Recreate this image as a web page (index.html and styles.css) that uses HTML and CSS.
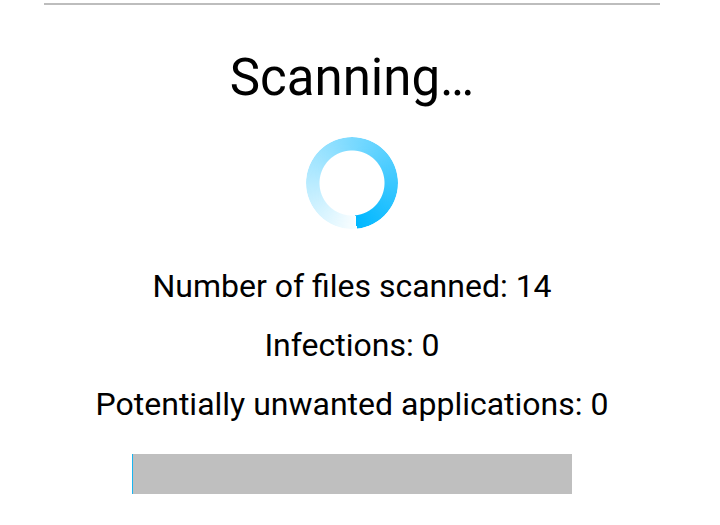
FILE: index.html
```html
<!DOCTYPE html>
<html>
<head>
<meta charset="utf-8">
<link rel="stylesheet" href="styles.css">
</head>
<body>
<div class="panel">
  <div class="rule"></div>
  <h1 class="title">Scanning…</h1>
  <div class="spinner"></div>
  <p class="stat">Number of files scanned: 14</p>
  <p class="stat">Infections: 0</p>
  <p class="stat">Potentially unwanted applications: 0</p>
  <div class="progress"><div class="progress-fill" style="width:1px"></div></div>
</div>
</body>
</html>
```
FILE: styles.css
```css
html, body {
  margin: 0;
  padding: 0;
  background: #ffffff;
}
body {
  font-family: Roboto, "Liberation Sans", sans-serif;
  color: #000;
}
.panel {
  width: 616px;
  margin-left: 44px;
  padding-top: 3px;
  display: flex;
  flex-direction: column;
  align-items: center;
}
.rule {
  align-self: stretch;
  height: 2px;
  background: #bdbdbd;
}
.title {
  margin: 44px 0 0 0;
  font-size: 51px;
  font-weight: 400;
  line-height: 57px;
}
.spinner {
  margin-top: 31px;
  width: 92px;
  height: 92px;
  border-radius: 50%;
  background: conic-gradient(from 174deg, rgba(0, 183, 255, 0.02), rgba(0, 183, 255, 0.5) 50%, #00b7ff);
  -webkit-mask: radial-gradient(circle, transparent 32px, #000 33px);
  mask: radial-gradient(circle, transparent 32px, #000 33px);
}
.stat {
  margin: 0;
  font-size: 32px;
  line-height: 59px;
}
.spinner + .stat {
  margin-top: 28px;
}
.progress {
  margin-top: 20px;
  width: 440px;
  height: 40px;
  background: #bfbfbf;
  display: flex;
}
.progress-fill {
  background: #1ab4ef;
  height: 100%;
}
```
